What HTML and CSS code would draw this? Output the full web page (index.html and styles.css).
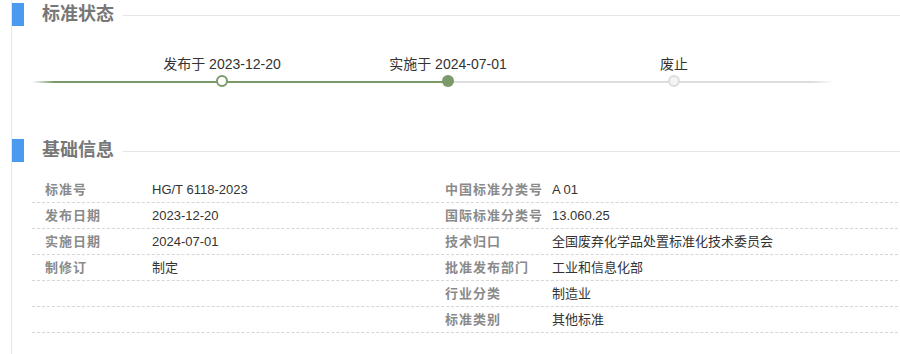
FILE: index.html
```html
<!DOCTYPE html>
<html lang="zh-CN">
<head>
<meta charset="utf-8">
<title>标准状态</title>
<link rel="stylesheet" href="styles.css">
</head>
<body>
<div class="page">
  <div class="sec-head">
    <span class="bar"></span>
    <h2 class="sec-title">标准状态</h2>
    <span class="rule"></span>
  </div>
  <div class="timeline">
    <div class="steps">
      <div class="step">
        <span class="step-label">发布于 2023-12-20</span>
        <span class="node node-done"></span>
      </div>
      <div class="step">
        <span class="step-label">实施于 2024-07-01</span>
        <span class="node node-current"></span>
      </div>
      <div class="step">
        <span class="step-label">废止</span>
        <span class="node node-todo"></span>
      </div>
    </div>
  </div>
  <div class="sec-head">
    <span class="bar"></span>
    <h2 class="sec-title">基础信息</h2>
    <span class="rule"></span>
  </div>
  <div class="info">
    <div class="row">
      <span class="lbl">标准号</span><span class="val">HG/T 6118-2023</span>
      <span class="lbl">中国标准分类号</span><span class="val">A 01</span>
    </div>
    <div class="row">
      <span class="lbl">发布日期</span><span class="val">2023-12-20</span>
      <span class="lbl">国际标准分类号</span><span class="val">13.060.25</span>
    </div>
    <div class="row">
      <span class="lbl">实施日期</span><span class="val">2024-07-01</span>
      <span class="lbl">技术归口</span><span class="val">全国废弃化学品处置标准化技术委员会</span>
    </div>
    <div class="row">
      <span class="lbl">制修订</span><span class="val">制定</span>
      <span class="lbl">批准发布部门</span><span class="val">工业和信息化部</span>
    </div>
    <div class="row">
      <span class="lbl"></span><span class="val"></span>
      <span class="lbl">行业分类</span><span class="val">制造业</span>
    </div>
    <div class="row">
      <span class="lbl"></span><span class="val"></span>
      <span class="lbl">标准类别</span><span class="val">其他标准</span>
    </div>
  </div>
</div>
</body>
</html>
```

FILE: styles.css
```css
* { box-sizing: border-box; }
html, body { margin: 0; padding: 0; background: #fff; }
body {
  font-family: "Liberation Sans", Arial, "Noto Sans CJK SC", sans-serif;
  color: #333;
}
.page {
  margin-left: 11px;
  border-left: 1px solid #e6e6e6;
  height: 354px;
  padding-top: 3px;
}
.sec-head {
  display: flex;
  align-items: center;
  height: 23px;
}
.bar {
  width: 12px;
  height: 23px;
  background: #4a9bf0;
  flex: none;
}
.sec-title {
  margin: 0 0 0 18px;
  font-size: 18px;
  font-weight: bold;
  color: #777;
  line-height: 23px;
  white-space: nowrap;
}
.rule {
  flex: 1;
  height: 1px;
  background: #e6e6e6;
  margin-left: 9px;
  margin-top: 1px;
}
.timeline {
  padding-top: 28px;
  margin-bottom: 52px;
  background-image: linear-gradient(to right,
    rgba(122,154,106,0) 0px,
    #7a9a6a 22px,
    #7a9a6a 418px,
    #dddddd 418px,
    #dddddd 780px,
    rgba(221,221,221,0) 803px);
  background-size: 803px 2px;
  background-position: 20px 55px;
  background-repeat: no-repeat;
}
.steps {
  display: flex;
  margin-left: 97px;
}
.step {
  width: 226px;
  display: flex;
  flex-direction: column;
  align-items: center;
}
.step-label {
  font-size: 14px;
  line-height: 20px;
  color: #333;
  white-space: nowrap;
}
.node {
  width: 12px;
  height: 12px;
  border-radius: 50%;
  margin-top: 1px;
}
.node-done {
  background: #fff;
  border: 2px solid #7a9a6a;
}
.node-current {
  background: #7a9a6a;
}
.node-todo {
  background: #f4f4f4;
  border: 2px solid #dddddd;
}
.info {
  margin: 15px 2px 0 20px;
}
.row {
  display: grid;
  grid-template-columns: 120px 280px 120px 1fr;
  height: 26px;
  align-items: center;
  border-bottom: 1px dashed #d6d6d6;
  font-size: 13px;
  line-height: 25px;
}
.lbl {
  padding-left: 13px;
  font-weight: bold;
  color: #8a8a8a;
  letter-spacing: 1px;
  white-space: nowrap;
}
.val {
  color: #333;
  white-space: nowrap;
}
```
